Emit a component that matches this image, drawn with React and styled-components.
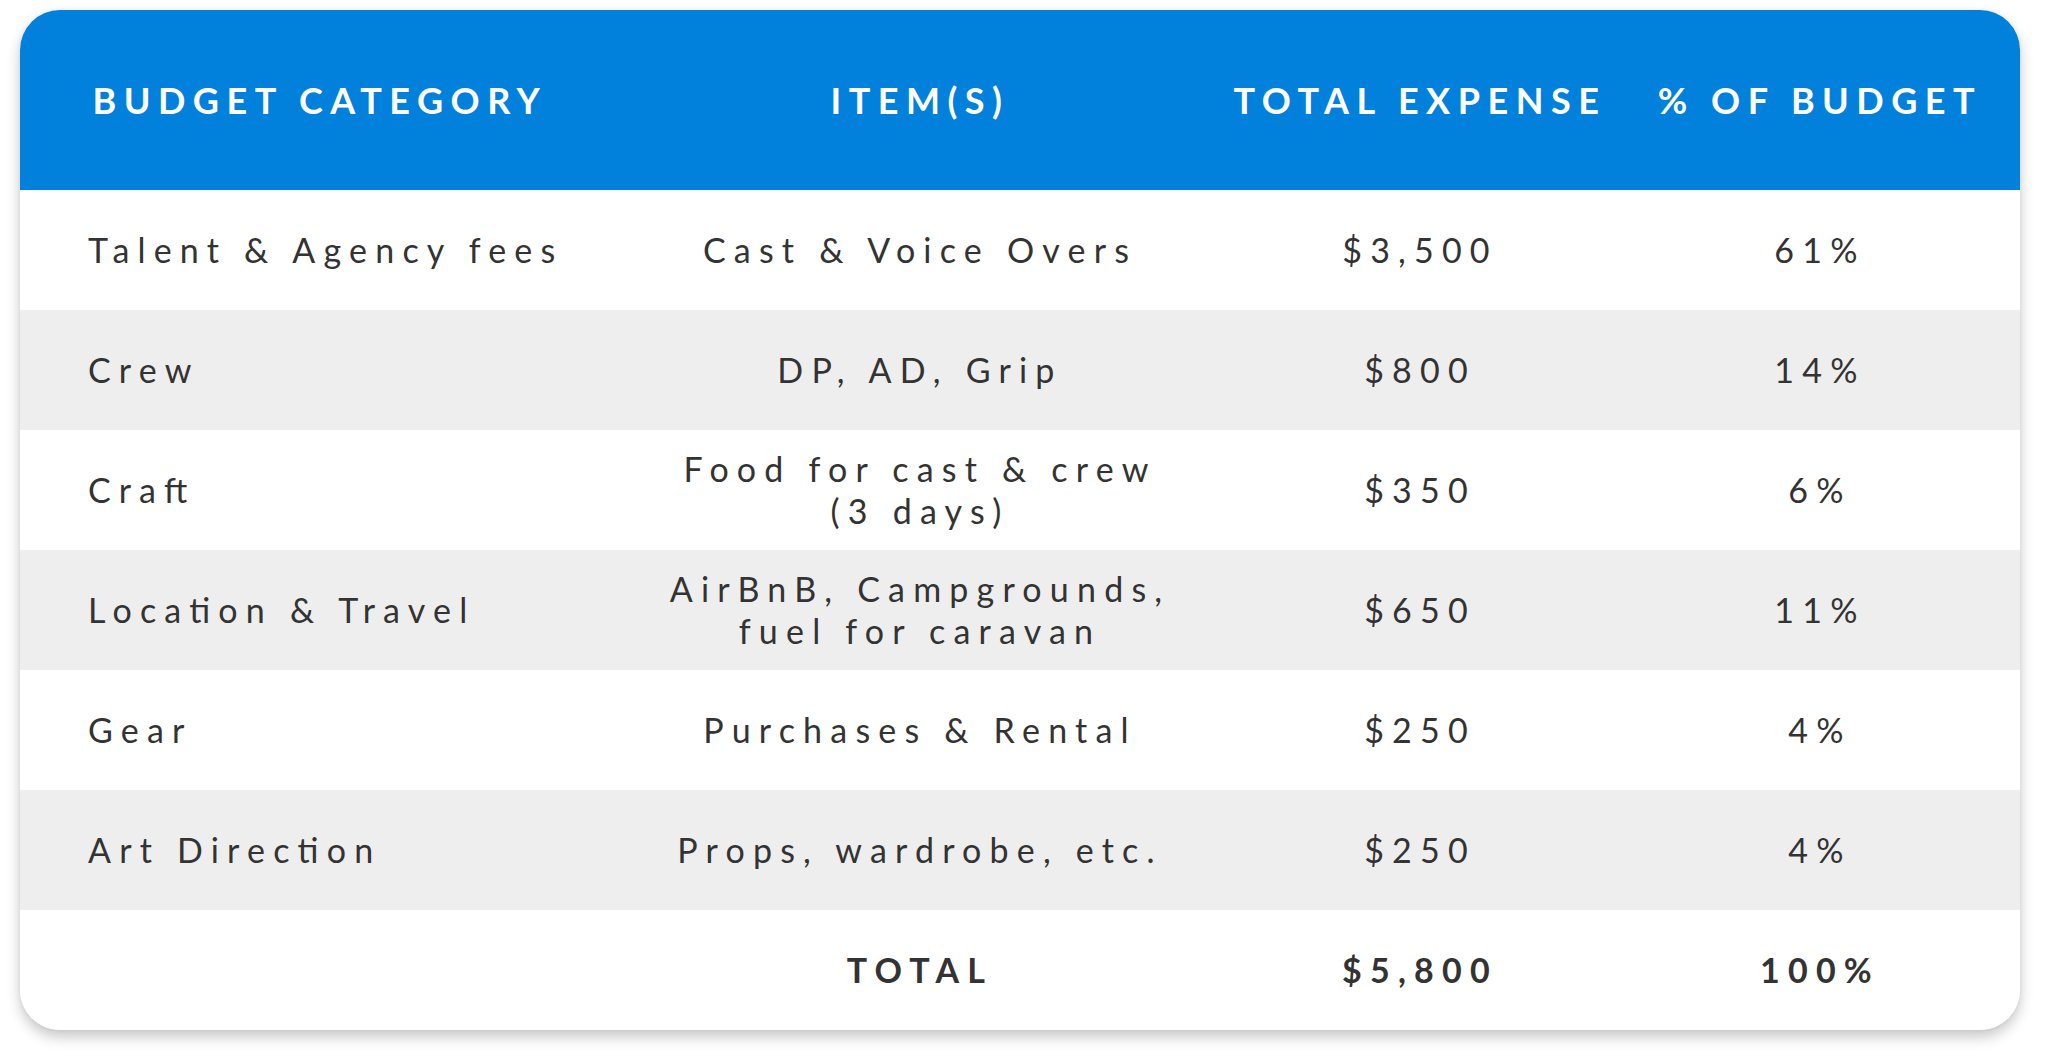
import React from 'react';
import styled, { createGlobalStyle } from 'styled-components';

const GlobalStyle = createGlobalStyle`
  html, body {
    margin: 0;
    padding: 0;
    background: #ffffff;
  }
  body {
    font-family: Lato, "Open Sans", "Liberation Sans", sans-serif;
    -webkit-font-smoothing: antialiased;
  }
`;

const Page = styled.div`
  padding: 10px 33px 30px 20px;
`;

const Card = styled.div`
  width: 2000px;
  border-radius: 40px;
  overflow: hidden;
  background: #ffffff;
  box-shadow: 0 7px 14px rgba(0, 0, 0, 0.22), 0 0 4px rgba(0, 0, 0, 0.06);
`;

const Row = styled.div`
  display: grid;
  grid-template-columns: 600px 600px 400px 400px;
  height: ${props => (props.head ? '180px' : '120px')};
  background: ${props => props.head ? '#0180dc' : props.shade ? '#eeeeee' : '#ffffff'};
`;

const Cell = styled.div`
  display: flex;
  align-items: center;
  justify-content: ${props => (props.left ? 'flex-start' : 'center')};
  padding-left: ${props => (props.left ? '68px' : '0')};
  text-align: ${props => (props.left ? 'left' : 'center')};
  font-size: 34px;
  line-height: 42px;
  letter-spacing: 8.2px;
  color: #333333;
  font-weight: ${props => (props.bold ? 700 : 400)};
  font-feature-settings: "liga" 1;
`;

const HeadCell = styled.div`
  display: flex;
  align-items: center;
  justify-content: center;
  font-size: 36px;
  font-weight: 700;
  letter-spacing: 7.5px;
  text-transform: uppercase;
  color: #ffffff;
`;

const rows = [
  ['Talent & Agency fees', 'Cast & Voice Overs', '$3,500', '61%'],
  ['Crew', 'DP, AD, Grip', '$800', '14%'],
  ['Craft', ['Food for cast & crew', '(3 days)'], '$350', '6%'],
  ['Location & Travel', ['AirBnB, Campgrounds,', 'fuel for caravan'], '$650', '11%'],
  ['Gear', 'Purchases & Rental', '$250', '4%'],
  ['Art Direction', 'Props, wardrobe, etc.', '$250', '4%'],
];

const Lines = ({ text }) =>
  Array.isArray(text)
    ? text.map((t, i) => (
        <React.Fragment key={i}>
          {i > 0 && <br />}
          {t}
        </React.Fragment>
      ))
    : text;

export default function App() {
  return (
    <>
      <GlobalStyle />
      <Page>
        <Card>
          <Row head>
            <HeadCell>Budget Category</HeadCell>
            <HeadCell>Item(s)</HeadCell>
            <HeadCell>Total Expense</HeadCell>
            <HeadCell>% of Budget</HeadCell>
          </Row>
          {rows.map((r, i) => (
            <Row key={i} shade={i % 2 === 1}>
              <Cell left>{r[0]}</Cell>
              <Cell><div><Lines text={r[1]} /></div></Cell>
              <Cell>{r[2]}</Cell>
              <Cell>{r[3]}</Cell>
            </Row>
          ))}
          <Row>
            <Cell left />
            <Cell bold>TOTAL</Cell>
            <Cell bold>$5,800</Cell>
            <Cell bold>100%</Cell>
          </Row>
        </Card>
      </Page>
    </>
  );
}
